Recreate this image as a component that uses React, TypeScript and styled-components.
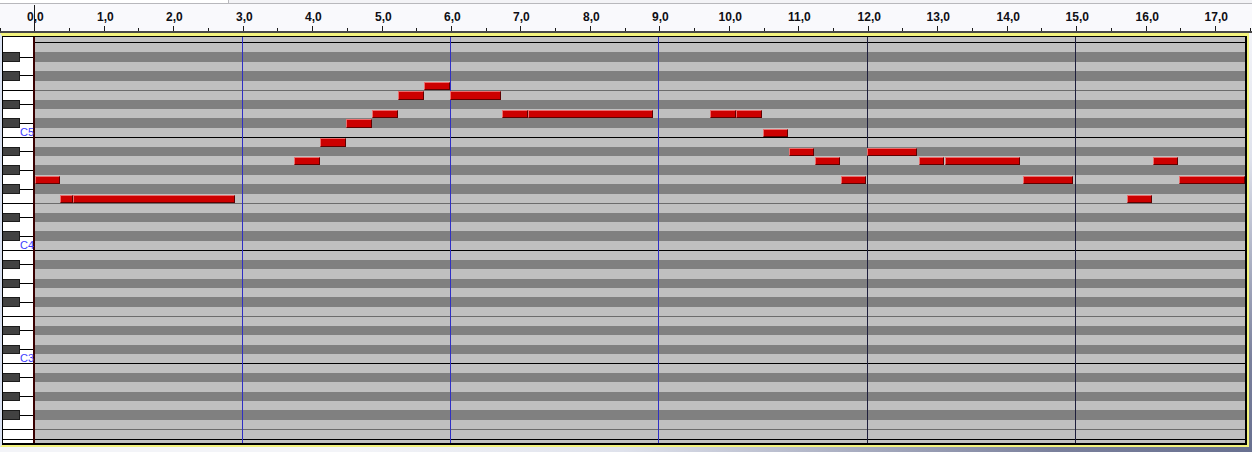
import React from 'react';
import styled, { createGlobalStyle } from 'styled-components';

const PPB = 69.45; // pixels per beat
const BEAT0 = 34.3; // screen x of beat 0
const GRID_X = 35; // screen x where the grid starts
const TOP_MIDI = 81; // A5
const BOTTOM_MIDI = 40; // E2
const BLACK = new Set([1, 3, 6, 8, 10]);

type NoteData = { midi: number; x0: number; x1: number };

const NOTES: NoteData[] = [
  { midi: 67, x0: 35, x1: 59 },
  { midi: 65, x0: 60, x1: 72 },
  { midi: 65, x0: 73, x1: 234 },
  { midi: 69, x0: 294, x1: 319 },
  { midi: 71, x0: 320, x1: 345 },
  { midi: 73, x0: 346, x1: 371 },
  { midi: 74, x0: 372, x1: 397 },
  { midi: 76, x0: 398, x1: 423 },
  { midi: 77, x0: 424, x1: 449 },
  { midi: 76, x0: 450, x1: 500 },
  { midi: 74, x0: 502, x1: 527 },
  { midi: 74, x0: 528, x1: 652 },
  { midi: 74, x0: 710, x1: 735 },
  { midi: 74, x0: 736, x1: 761 },
  { midi: 72, x0: 763, x1: 787 },
  { midi: 70, x0: 789, x1: 813 },
  { midi: 69, x0: 815, x1: 839 },
  { midi: 67, x0: 841, x1: 865 },
  { midi: 70, x0: 867, x1: 916 },
  { midi: 69, x0: 919, x1: 943 },
  { midi: 69, x0: 945, x1: 1019 },
  { midi: 67, x0: 1023, x1: 1072 },
  { midi: 65, x0: 1127, x1: 1151 },
  { midi: 69, x0: 1153, x1: 1177 },
  { midi: 67, x0: 1179, x1: 1244 },
];

const MEASURES = [
  { beat: 3, strong: false },
  { beat: 6, strong: false },
  { beat: 9, strong: false },
  { beat: 12, strong: true },
  { beat: 15, strong: true },
];

const PITCHES: number[] = [];
for (let m = TOP_MIDI; m >= BOTTOM_MIDI; m--) PITCHES.push(m);

type Boundary = 'c' | 'f' | 'none';
const boundaryOf = (m: number): Boundary => (m % 12 === 0 ? 'c' : m % 12 === 5 ? 'f' : 'none');

const GlobalStyle = createGlobalStyle`
  html, body { margin: 0; padding: 0; overflow: hidden; background: #fff; }
  body { font-family: "Liberation Sans", Arial, sans-serif; }
`;

const Screen = styled.div`
  width: 1252px;
  height: 452px;
  overflow: hidden;
  display: flex;
  flex-direction: column;
  background: radial-gradient(ellipse 900px 420px at 100% 100%, #687090 0%, #7a809c 22%, #dfe2ec 70%, #f3f4f8 100%);
`;

const TopBar = styled.div`
  height: 3px;
  display: flex;
  background: #f3f3f6;
  border-bottom: 1px solid #b8b8bc;
`;

const Tab = styled.div`
  width: 228px;
  background: #ffffff;
  border-right: 1px solid #b8b8bc;
`;

const Ruler = styled.div`
  position: relative;
  height: 27px;
  background: #f9f9fc;
  border-bottom: 2px solid #464646;
`;

const Tick = styled.div<{ $major: boolean }>`
  position: absolute;
  bottom: 0;
  width: 1px;
  height: ${(p) => (p.$major ? 5 : 3)}px;
  background: #1c1c1c;
`;

const StartMarker = styled.div`
  position: absolute;
  top: 1px;
  bottom: 0;
  width: 1px;
  background: #1a1a1a;
`;

const RulerLabel = styled.div`
  position: absolute;
  top: 7px;
  transform: translateX(-50%);
  font-size: 12px;
  line-height: 12px;
  font-weight: bold;
  color: #0e0e14;
  white-space: nowrap;
`;

const Frame = styled.div`
  width: 1249px;
  box-sizing: border-box;
  border-style: solid;
  border-color: #f3f37c #f3f37c #f3f37c #dbe3f3;
  border-width: 3px 2px 2px 2px;
`;

const Inner = styled.div`
  display: flex;
  height: 406px;
  border-style: solid;
  border-color: #000;
  border-width: 1px 2px 2px 1px;
`;

const Keyboard = styled.div`
  width: 30px;
  flex: none;
  display: flex;
  flex-direction: column;
  background: #ffffff;
  border-right: 2px solid #3a0000;
  position: relative;
`;

const Grid = styled.div`
  flex: 1;
  display: flex;
  flex-direction: column;
  background: #c0c0c0;
  position: relative;
`;

const TopPad = styled.div`
  height: 5px;
  flex: none;
`;

const BottomPad = styled.div`
  flex: 1;
`;

const Lane = styled.div<{ $edge: string }>`
  height: 396px;
  flex: none;
  display: flex;
  flex-direction: column;
  border-top: 1px solid ${(p) => p.$edge};
  border-bottom: 1px solid #000;
`;

const lineColor = (b: Boundary, keyboard: boolean) =>
  b === 'c' ? '#000' : b === 'f' ? (keyboard ? '#000' : '#6c6c6c') : 'transparent';

const KeyRow = styled.div<{ $boundary: Boundary }>`
  flex: 1;
  min-height: 0;
  position: relative;
  display: flex;
  align-items: stretch;
  &::after {
    content: '';
    position: absolute;
    left: 0;
    right: 0;
    bottom: -1px;
    height: 1px;
    z-index: 1;
    background: ${(p) => lineColor(p.$boundary, true)};
  }
`;

const BlackKey = styled.div`
  width: 17px;
  flex: none;
  box-sizing: border-box;
  background: #424242;
  border: 1px solid #1c1c1c;
  border-left: none;
`;

const KeyStem = styled.div`
  flex: 1;
  align-self: center;
  height: 1px;
  background: #000;
`;

const OctaveLabel = styled.span`
  position: absolute;
  right: -1px;
  bottom: -1px;
  z-index: 2;
  font-size: 11px;
  line-height: 11px;
  color: #4040ff;
`;

const GridRow = styled.div<{ $black: boolean; $boundary: Boundary }>`
  flex: 1;
  min-height: 0;
  position: relative;
  background: ${(p) => (p.$black ? '#808080' : '#c0c0c0')};
  &::after {
    content: '';
    position: absolute;
    left: 0;
    right: 0;
    bottom: -1px;
    height: 1px;
    z-index: 1;
    background: ${(p) => lineColor(p.$boundary, false)};
  }
`;

const Note = styled.div`
  position: absolute;
  top: 1px;
  bottom: 0;
  z-index: 3;
  box-sizing: border-box;
  background: #cc0000;
  border: 1px solid;
  border-color: #ec6e6e #5e0000 #5e0000 #ec6e6e;
`;

const MeasureLine = styled.div<{ $strong: boolean }>`
  position: absolute;
  top: 0;
  bottom: 0;
  width: 1px;
  z-index: 2;
  background: ${(p) => (p.$strong ? '#1e1e3c' : '#2f2fc4')};
`;

const beatX = (b: number) => BEAT0 + b * PPB;

function RulerBar() {
  const items: React.ReactNode[] = [];
  for (let k = -1; k <= 35; k++) {
    const x = Math.max(0, Math.round(beatX(k / 2)));
    if (x > 1251) continue;
    const major = k % 2 === 0;
    if (k === 0) {
      items.push(<StartMarker key={`t${k}`} style={{ left: x }} />);
    } else {
      items.push(<Tick key={`t${k}`} $major={major} style={{ left: x }} />);
    }
    if (major && k >= 0) {
      items.push(
        <RulerLabel key={`l${k}`} style={{ left: x + 1.3 }}>
          {`${k / 2},0`}
        </RulerLabel>
      );
    }
  }
  return <Ruler>{items}</Ruler>;
}

function PianoKeys() {
  return (
    <Keyboard>
      <TopPad />
      <Lane $edge="#ffffff">
        {PITCHES.map((m) => {
          const black = BLACK.has(m % 12);
          const b = boundaryOf(m);
          return (
            <KeyRow key={m} $boundary={b}>
              {black && (
                <>
                  <BlackKey />
                  <KeyStem />
                </>
              )}
              {m % 12 === 0 && <OctaveLabel>{`C${m / 12 - 1}`}</OctaveLabel>}
            </KeyRow>
          );
        })}
      </Lane>
      <BottomPad />
    </Keyboard>
  );
}

function NoteGrid() {
  return (
    <Grid>
      <TopPad />
      <Lane $edge="#000">
        {PITCHES.map((m) => (
          <GridRow key={m} $black={BLACK.has(m % 12)} $boundary={boundaryOf(m)}>
            {NOTES.filter((n) => n.midi === m).map((n) => (
              <Note key={n.x0} style={{ left: n.x0 - GRID_X, width: n.x1 - n.x0 + 1 }} />
            ))}
          </GridRow>
        ))}
      </Lane>
      <BottomPad />
      {MEASURES.map((ms) => (
        <MeasureLine
          key={ms.beat}
          $strong={ms.strong}
          style={{ left: Math.round(beatX(ms.beat)) - 1 - GRID_X }}
        />
      ))}
    </Grid>
  );
}

export default function App() {
  return (
    <>
      <GlobalStyle />
      <Screen>
        <TopBar>
          <Tab />
        </TopBar>
        <RulerBar />
        <Frame>
          <Inner>
            <PianoKeys />
            <NoteGrid />
          </Inner>
        </Frame>
      </Screen>
    </>
  );
}
